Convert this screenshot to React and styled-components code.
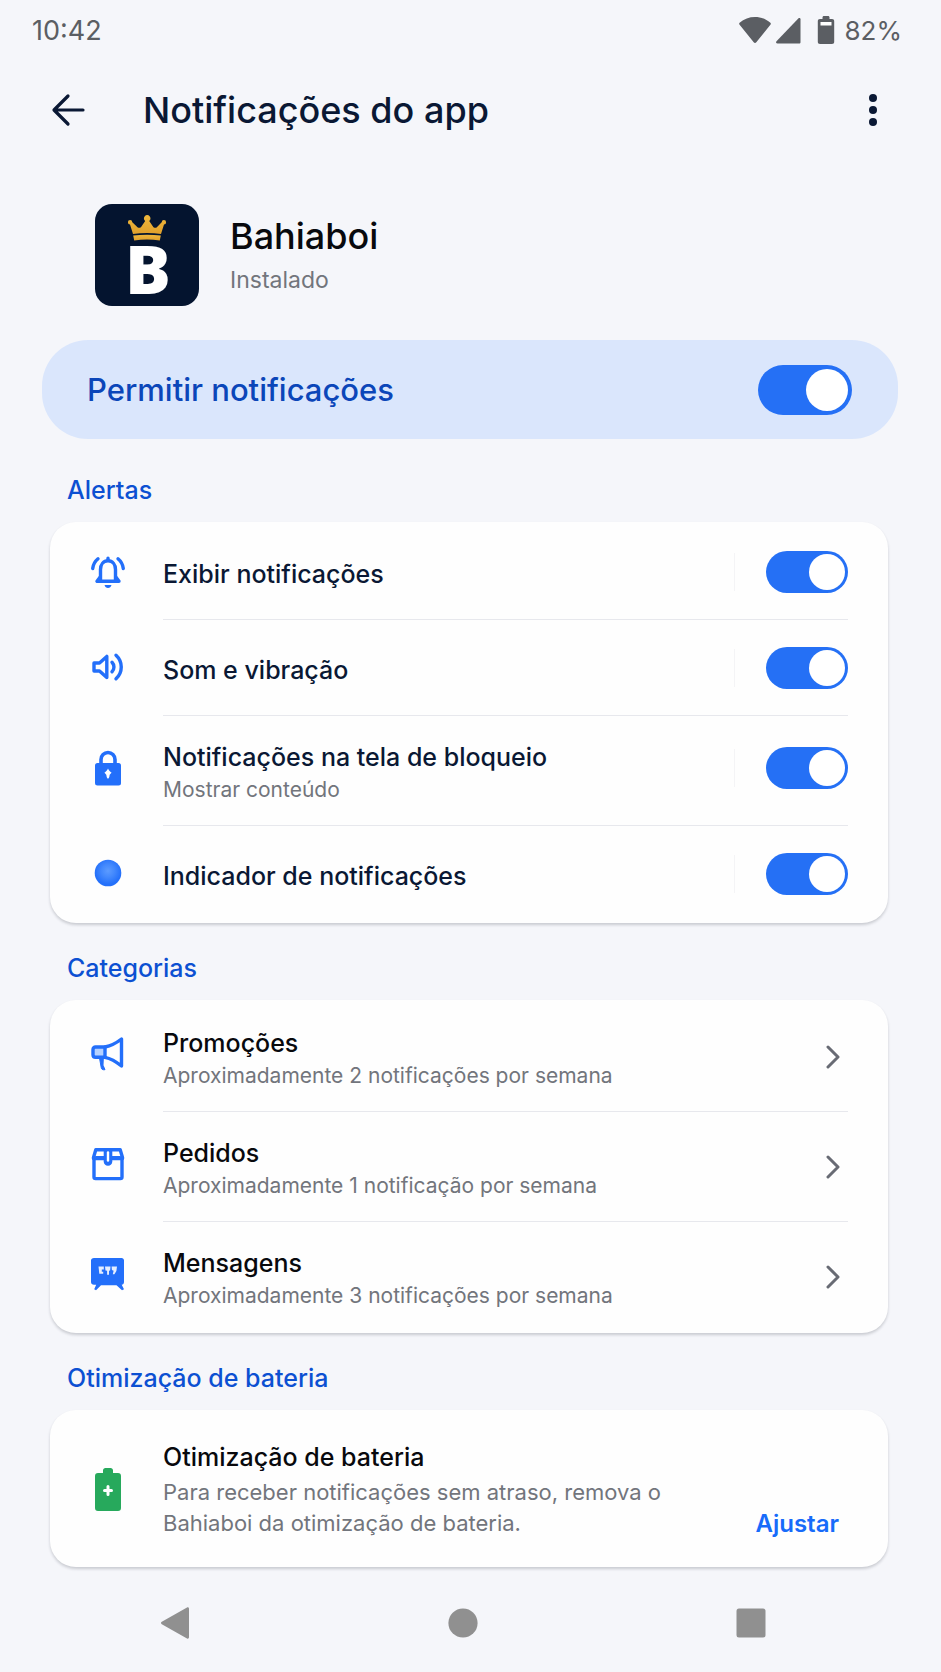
import React from 'react';
import styled, { createGlobalStyle } from 'styled-components';

const color = {
  page: '#f5f6fa',
  card: '#fefefe',
  ink: '#0a1834',
  black: '#08090d',
  muted: '#72757c',
  status: '#5b5e63',
  blue: '#2570f5',
  icon: '#236ffa',
  heading: '#0c50d2',
  pill: '#dae6fc',
  pillText: '#0b46b9',
  line: '#e7e8ed',
  nav: '#909090',
};

const GlobalStyle = createGlobalStyle`
  *, *::before, *::after { box-sizing: border-box; }
  body {
    margin: 0;
    background: ${color.page};
    color: ${color.ink};
    font-family: Inter, Roboto, "Liberation Sans", sans-serif;
    -webkit-font-smoothing: antialiased;
  }
  button { font: inherit; color: inherit; background: none; border: 0; padding: 0; cursor: pointer; }
  svg { display: block; flex: none; }
`;

const Screen = styled.div`
  min-height: 100vh;
  display: flex;
  flex-direction: column;
`;

const StatusBar = styled.div`
  height: 60px;
  padding: 0 39px 0 32px;
  display: flex;
  align-items: center;
  justify-content: space-between;
  color: ${color.status};
  font-size: 26px;
`;

const Clock = styled.time`
  font-size: 27px;
`;

const StatusIcons = styled.div`
  display: flex;
  align-items: center;
`;

const BatteryLevel = styled.span`
  margin-left: 10px;
`;

const AppBar = styled.header`
  height: 100px;
  padding: 0 44px;
  display: flex;
  align-items: center;
`;

const IconButton = styled.button`
  width: 48px;
  height: 48px;
  display: grid;
  place-items: center;
`;

const Title = styled.h1`
  flex: 1;
  margin: 0 0 0 51px;
  font-size: 36px;
  line-height: 44px;
  font-weight: 500;
`;

const Main = styled.main`
  flex: 1;
  padding: 0 43px 0 42px;
`;

const AppInfo = styled.section`
  margin: 44px 53px 34px;
  display: flex;
  align-items: center;
  gap: 31px;
`;

const Logo = styled.svg`
  overflow: visible;
`;

const AppName = styled.h2`
  margin: 0 0 6px;
  color: ${color.black};
  font-size: 36px;
  line-height: 44px;
  font-weight: 500;
`;

const AppState = styled.p`
  margin: 0;
  color: ${color.muted};
  font-size: 23px;
  line-height: 32px;
`;

const MasterSwitch = styled.label`
  min-height: 99px;
  margin-bottom: 35px;
  padding: 0 46px 0 45px;
  display: flex;
  align-items: center;
  justify-content: space-between;
  border-radius: 46px;
  background: ${color.pill};
  color: ${color.pillText};
  font-size: 31px;
  line-height: 40px;
  font-weight: 500;
  cursor: pointer;
`;

const Switch = styled.input.attrs({ type: 'checkbox' })`
  appearance: none;
  flex: none;
  width: ${(p) => (p.$large ? 94 : 82)}px;
  height: ${(p) => (p.$large ? 50 : 42)}px;
  margin: 0;
  padding: ${(p) => (p.$large ? 4 : 3)}px;
  display: flex;
  align-items: center;
  justify-content: flex-start;
  border-radius: 25px;
  background: #b4b8c2;
  cursor: pointer;

  &::before {
    content: '';
    height: 100%;
    aspect-ratio: 1;
    border-radius: 50%;
    background: #fff;
  }

  &:checked {
    justify-content: flex-end;
    background: ${color.blue};
  }
`;

const Heading = styled.h2`
  margin: 29px 25px 16px;
  color: ${color.heading};
  font-size: 25px;
  line-height: 32px;
  font-weight: 450;
`;

const Card = styled.div`
  margin: 0 10px 0 8px;
  padding: 2px 0;
  border-radius: 26px;
  background: ${color.card};
  box-shadow: 0 2px 3px rgba(30, 34, 50, 0.2);
`;

const Row = styled.div`
  width: 100%;
  padding: 0 40px;
  display: flex;
  gap: 37px;
  text-align: left;
  cursor: pointer;

  & + & > :last-child {
    border-top: 1px solid ${color.line};
  }
`;

const IconSlot = styled.span`
  width: 36px;
  padding-bottom: ${(p) => (p.$raised ? 5 : 0)}px;
  display: grid;
  place-items: center;
  color: ${color.icon};
`;

const RowBody = styled.span`
  flex: 1;
  box-sizing: content-box;
  min-height: ${(p) => (p.$tall ? 109 : 95)}px;
  display: flex;
  align-items: center;
`;

const RowText = styled.span`
  flex: 1;
  padding-top: 4px;
`;

const RowTitle = styled.span`
  display: block;
  color: ${(p) => (p.$strong ? color.black : color.ink)};
  font-size: 25px;
  line-height: 34px;
  font-weight: ${(p) => (p.$strong ? 500 : 450)};
`;

const RowNote = styled.span`
  display: block;
  color: ${color.muted};
  font-size: 21px;
  line-height: 32px;
`;

const SwitchCell = styled.span`
  padding-left: 32px;
  margin-bottom: ${(p) => (p.$raised ? 6 : 0)}px;
  display: flex;
  align-items: center;
  background: linear-gradient(#f4f4f6, #f4f4f6) left center / 1px 38px no-repeat;
`;

const ChevronCell = styled.span`
  padding-right: 8px;
  color: #686b74;
`;

const BatteryCard = styled(Card)`
  min-height: 157px;
  padding: 30px 49px 28px 40px;
  display: flex;
  gap: 37px;
`;

const BatteryText = styled.div`
  flex: 1;
`;

const BatteryTitle = styled.h3`
  margin: 0 0 3px;
  color: ${color.black};
  font-size: 25px;
  line-height: 34px;
  font-weight: 500;
`;

const BatteryNote = styled.p`
  max-width: 520px;
  margin: 0;
  color: ${color.muted};
  font-size: 22px;
  line-height: 31px;
`;

const AdjustButton = styled.button`
  && {
    align-self: flex-end;
    color: #176bfa;
    font-size: 24px;
    line-height: 31px;
    font-weight: 600;
  }
`;

const NavBar = styled.nav`
  height: 105px;
  padding: 6px 166px 0 151px;
  display: flex;
  align-items: center;
  justify-content: space-between;
  color: ${color.nav};
`;

const WifiIcon = () => (
  <svg width="32" height="28" viewBox="0 0 32 28" fill="currentColor" aria-hidden="true">
    <path d="M.6 6.8C5 3 10.300 1 16 1s11 2 15.400 5.800c.5.500.6 1.100.2 1.700L17.300 26.200c-.7.900-1.900.9-2.600 0L.4 8.500c-.4-.6-.3-1.200.2-1.700z" />
  </svg>
);

const SignalIcon = () => (
  <svg width="46" height="28" viewBox="-1 0 46 28" fill="currentColor" aria-hidden="true">
    <path d="M28.500 3.200V26c0 1-.5 1.500-1.500 1.500H5.500c-1.400 0-1.900-1.200-1-2.200L26.300 2.400c.9-.9 2.200-.5 2.200.8z" />
  </svg>
);

const BatteryIcon = () => (
  <svg width="18" height="28" viewBox="0 0 18 28" aria-hidden="true">
    <path fill="currentColor" d="M5.500 3V1.500C5.500.7 6 0 7 0h4c1 0 1.500.7 1.500 1.500V3H15c1.400 0 2.200.8 2.200 2.200v20.600c0 1.400-.8 2.200-2.200 2.200H3C1.600 28 .8 27.200.8 25.800V5.200C.8 3.800 1.600 3 3 3z" />
    <rect x="3.500" y="6" width="11" height="3.500" fill="#fff" />
  </svg>
);

const BackArrow = () => (
  <svg width="34" height="34" viewBox="0 0 34 34" fill="none" stroke="currentColor" strokeWidth="3.200" strokeLinecap="round" strokeLinejoin="round" aria-hidden="true">
    <path d="M17 3 3 17l14 14M3.500 17H32" />
  </svg>
);

const MoreDots = () => (
  <svg width="8" height="34" viewBox="0 0 8 34" fill="currentColor" aria-hidden="true">
    <circle cx="4" cy="5" r="4" />
    <circle cx="4" cy="17" r="4" />
    <circle cx="4" cy="29" r="4" />
  </svg>
);

const BahiaboiLogo = () => (
  <Logo width="104" height="102" viewBox="0 0 104 102" role="img" aria-label="Bahiaboi">
    <defs>
      <linearGradient id="gold" x1="0" y1="0" x2="0" y2="1">
        <stop offset="0" stopColor="#f0b83c" />
        <stop offset="1" stopColor="#e0a02c" />
      </linearGradient>
    </defs>
    <rect width="104" height="102" rx="17" fill="#04142f" />
    <g fill="url(#gold)">
      <path d="M38 30 35 20.500a2.200 2.200 0 1 1 2.300-2.300l5.500 5.300c1.500.8 3 .2 3.800-1.300l3.600-5.200a3.300 3.300 0 1 1 4 0l3.600 5.200c.8 1.500 2.300 2.100 3.800 1.300l5.100-5.300A2.200 2.200 0 1 1 69 20.500L66 30c-9-1.300-19-1.300-28 0z" />
      <path d="M38.200 31.600c9-1.300 18.600-1.300 27.600 0l-1 4.800c-8.500-1.200-17.100-1.200-25.600 0z" />
    </g>
    <text x="53" y="90" textAnchor="middle" fill="#fff" fontFamily="'Open Sans', Inter, sans-serif" fontWeight="800" fontSize="68">B</text>
  </Logo>
);

const stroke = { fill: 'none', stroke: 'currentColor', strokeLinecap: 'round', strokeLinejoin: 'round' };

const BellIcon = () => (
  <svg width="36" height="36" viewBox="0 0 36 36" {...stroke} strokeWidth="3.400" aria-hidden="true">
    <path d="M10.500 27V15.500c0-5 3-8.700 7.500-8.700s7.500 3.700 7.500 8.700V27" />
    <path d="M7 27.300h22l-3-4M7 27.300l3-4M18 6V4.200" />
    <path d="M8 4.800C5 7.300 3.200 10.500 2.700 14.500M28 4.800c3 2.500 4.800 5.700 5.300 9.700" />
    <path d="M14.500 31h7c-.5 1.900-1.800 3-3.500 3s-3-1.100-3.500-3z" fill="currentColor" stroke="none" />
  </svg>
);

const SpeakerIcon = () => (
  <svg width="36" height="36" viewBox="0 0 36 36" {...stroke} strokeWidth="3.400" aria-hidden="true">
    <path d="M4 14h5.500l7.300-6.600v21.200L9.500 22H4z" />
    <path d="M22 13.200c2.600 2.700 2.600 6.900 0 9.600M26 6.200c7 6.400 7 17.200 0 23.600" />
  </svg>
);

const LockIcon = () => (
  <svg width="36" height="36" viewBox="0 0 36 36" aria-hidden="true">
    <path d="M11 15V9.500a7 7 0 0 1 14 0V15" fill="none" stroke="currentColor" strokeWidth="3.600" />
    <rect x="5" y="13" width="26" height="22.500" rx="2.500" fill="currentColor" />
    <path d="M18 18.500c.8 1.800 1.700 2.800 3.600 4.300-1.200 1.200-2 1.500-2.100 3-.1 1.300-.6 2.400-1.500 3-.9-.6-1.400-1.700-1.500-3-.1-1.500-.9-1.800-2.100-3 1.900-1.500 2.800-2.500 3.600-4.300z" fill="#fff" />
  </svg>
);

const DotIcon = () => (
  <svg width="36" height="36" viewBox="0 0 36 36" aria-hidden="true">
    <defs>
      <radialGradient id="dot" cx=".5" cy=".42" r=".5">
        <stop offset="0" stopColor="#5c9bff" />
        <stop offset=".5" stopColor="#4288fd" />
        <stop offset="1" stopColor="#2470fa" />
      </radialGradient>
    </defs>
    <circle cx="18" cy="18" r="13.300" fill="url(#dot)" />
  </svg>
);

const MegaphoneIcon = () => (
  <svg width="36" height="36" viewBox="0 0 36 36" {...stroke} strokeWidth="3.400" aria-hidden="true">
    <path d="M15 11H5.500C4 11 3 12 3 13.500v5.300c0 1.500 1 2.500 2.500 2.500H15z" fill="#b5d1ff" />
    <path d="M15 11c6-1.200 11-3.700 16.500-8v27C26 25.500 21 22.500 15 21.300" />
    <path d="M9.500 22l1.700 9.500c.3 2 1.300 2.500 3.800 2.200l-2-4.500.3-7z" fill="currentColor" strokeWidth="1" />
  </svg>
);

const PackageIcon = () => (
  <svg width="36" height="36" viewBox="0 0 36 36" {...stroke} strokeWidth="3.400" aria-hidden="true">
    <path d="M4 13.500V31c0 1 .6 1.600 1.600 1.600h24.800c1 0 1.600-.6 1.600-1.600V13.500" />
    <path d="M5.800 3.800h24.400l2.300 7.700v1H3.500v-1z" />
    <path d="M6 11.800h24" />
    <path d="M13.700 3.500h8.600v12c0 2.300-1.800 4.300-4.300 4.300s-4.300-2-4.300-4.300z" fill="currentColor" stroke="none" />
    <path d="M18 6.500v8" stroke="#fff" strokeWidth="2.400" />
  </svg>
);

const MessageIcon = () => (
  <svg width="36" height="36" viewBox="0 0 36 36" aria-hidden="true">
    <path d="M4 2h27.500C33 2 34 3 34 4.500V26c0 1.500-.9 2.600-2.300 2.800l2.300 4.400-2 1-5.500-5H11l-5 5-1.800-1 2-4.400H4c-1.700 0-3-1.100-3-2.800V4.500C1 3 2.200 2 4 2z" fill="currentColor" />
    <path d="M8.500 10.500h5.300v3h-2v2.200h1.400v2H9.300zM15 10.500h5.500l-.4 4-1.100.3v4h-1.900v-4l-1.600-.3zM21.600 10.500H27l-.6 4.500-2 3.300h-1.600l.8-3.600-1.700-.7z" fill="#e4eeff" />
  </svg>
);

const ChevronIcon = () => (
  <svg width="14" height="24" viewBox="0 0 14 24" {...stroke} strokeWidth="3" aria-hidden="true">
    <path d="M2 2l10 10L2 22" />
  </svg>
);

const BatterySaverIcon = () => (
  <svg width="26" height="43" viewBox="0 0 26 43" aria-hidden="true">
    <path d="M8 5V2.500C8 1 9 0 10.500 0h5C17 0 18 1 18 2.500V5h5c2 0 3 1 3 3v32c0 2-1 3-3 3H3c-2 0-3-1-3-3V8c0-2 1-3 3-3z" fill="#27a95c" />
    <path d="M13 18.500v8M9.500 22.500h7" stroke="#fff" strokeWidth="3" strokeLinecap="round" />
  </svg>
);

const NavBack = () => (
  <svg width="30" height="32" viewBox="0 0 30 32" fill="currentColor" aria-hidden="true">
    <path d="M27 .600c1-.6 2 0 2 1.200v28.400c0 1.200-1 1.800-2 1.200L1.800 17.200c-1.100-.6-1.100-1.800 0-2.400z" />
  </svg>
);

const NavHome = () => (
  <svg width="30" height="30" viewBox="0 0 30 30" fill="currentColor" aria-hidden="true">
    <circle cx="15" cy="15" r="14.600" />
  </svg>
);

const NavRecents = () => (
  <svg width="30" height="30" viewBox="0 0 30 30" fill="currentColor" aria-hidden="true">
    <rect x=".5" y=".5" width="29" height="29" rx="2.500" />
  </svg>
);

const alerts = [
  { title: 'Exibir notificações', Icon: BellIcon },
  { title: 'Som e vibração', Icon: SpeakerIcon },
  { title: 'Notificações na tela de bloqueio', note: 'Mostrar conteúdo', Icon: LockIcon },
  { title: 'Indicador de notificações', Icon: DotIcon },
];

const categories = [
  { title: 'Promoções', note: 'Aproximadamente 2 notificações por semana', Icon: MegaphoneIcon },
  { title: 'Pedidos', note: 'Aproximadamente 1 notificação por semana', Icon: PackageIcon },
  { title: 'Mensagens', note: 'Aproximadamente 3 notificações por semana', Icon: MessageIcon },
];

const SwitchRow = ({ title, note, Icon }) => (
  <Row as="label">
    <IconSlot $raised={Boolean(note)}><Icon /></IconSlot>
    <RowBody $tall={Boolean(note)}>
      <RowText>
        <RowTitle>{title}</RowTitle>
        {note && <RowNote>{note}</RowNote>}
      </RowText>
      <SwitchCell $raised={Boolean(note)}>
        <Switch defaultChecked />
      </SwitchCell>
    </RowBody>
  </Row>
);

const CategoryRow = ({ title, note, Icon }) => (
  <Row as="button" type="button">
    <IconSlot $raised><Icon /></IconSlot>
    <RowBody $tall>
      <RowText>
        <RowTitle $strong>{title}</RowTitle>
        <RowNote>{note}</RowNote>
      </RowText>
      <ChevronCell><ChevronIcon /></ChevronCell>
    </RowBody>
  </Row>
);

export default function App() {
  return (
    <Screen>
      <GlobalStyle />
      <StatusBar>
        <Clock>10:42</Clock>
        <StatusIcons>
          <WifiIcon />
          <SignalIcon />
          <BatteryIcon />
          <BatteryLevel>82%</BatteryLevel>
        </StatusIcons>
      </StatusBar>
      <AppBar>
        <IconButton type="button" aria-label="Voltar"><BackArrow /></IconButton>
        <Title>Notificações do app</Title>
        <IconButton type="button" aria-label="Mais opções"><MoreDots /></IconButton>
      </AppBar>
      <Main>
        <AppInfo>
          <BahiaboiLogo />
          <div>
            <AppName>Bahiaboi</AppName>
            <AppState>Instalado</AppState>
          </div>
        </AppInfo>
        <MasterSwitch>
          Permitir notificações
          <Switch $large defaultChecked />
        </MasterSwitch>

        <Heading>Alertas</Heading>
        <Card>
          {alerts.map((item) => <SwitchRow key={item.title} {...item} />)}
        </Card>

        <Heading>Categorias</Heading>
        <Card>
          {categories.map((item) => <CategoryRow key={item.title} {...item} />)}
        </Card>

        <Heading>Otimização de bateria</Heading>
        <BatteryCard>
          <IconSlot><BatterySaverIcon /></IconSlot>
          <BatteryText>
            <BatteryTitle>Otimização de bateria</BatteryTitle>
            <BatteryNote>
              Para receber notificações sem atraso, remova o Bahiaboi da otimização de bateria.
            </BatteryNote>
          </BatteryText>
          <AdjustButton type="button">Ajustar</AdjustButton>
        </BatteryCard>
      </Main>
      <NavBar aria-label="Navegação do sistema">
        <IconButton type="button" aria-label="Voltar"><NavBack /></IconButton>
        <IconButton type="button" aria-label="Início"><NavHome /></IconButton>
        <IconButton type="button" aria-label="Recentes"><NavRecents /></IconButton>
      </NavBar>
    </Screen>
  );
}
